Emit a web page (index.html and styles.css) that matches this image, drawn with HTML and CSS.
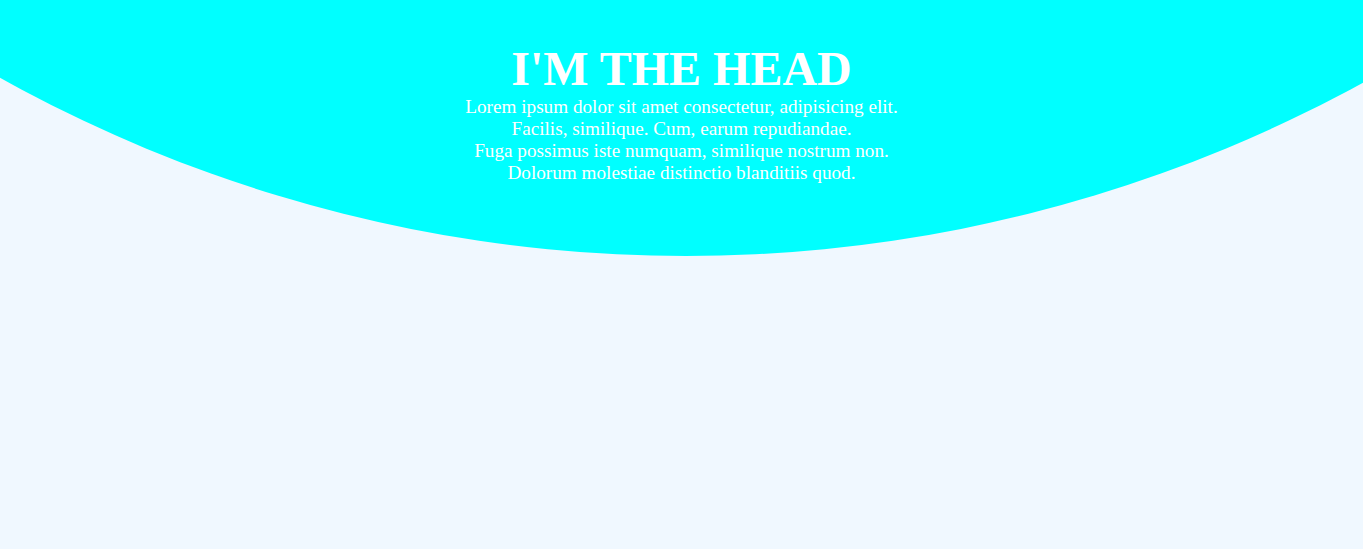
FILE: index.html
```html
<!DOCTYPE html>
<html lang="en">
<head>
<meta charset="utf-8">
<title>Head</title>
<link rel="stylesheet" href="styles.css">
</head>
<body>
<header class="head">
  <h1 class="head-title">I'M THE HEAD</h1>
  <p class="head-text">Lorem ipsum dolor sit amet consectetur, adipisicing elit.<br>Facilis, similique. Cum, earum repudiandae.<br>Fuga possimus iste numquam, similique nostrum non.<br>Dolorum molestiae distinctio blanditiis quod.</p>
</header>
</body>
</html>
```
FILE: styles.css
```css
html, body {
  margin: 0;
  padding: 0;
}
body {
  background: #f0f8ff;
  font-family: "Liberation Serif", "Times New Roman", serif;
  min-height: 100vh;
}
.head {
  background: #00ffff;
  color: #ffffff;
  text-align: center;
  height: 256px;
  padding-top: 41px;
  box-sizing: border-box;
  clip-path: circle(1410px at 686px -1154px);
}
.head-title {
  margin: 0;
  font-size: 48px;
  font-weight: bold;
  line-height: normal;
}
.head-text {
  margin: 0;
  font-size: 19.2px;
  line-height: normal;
}
```
